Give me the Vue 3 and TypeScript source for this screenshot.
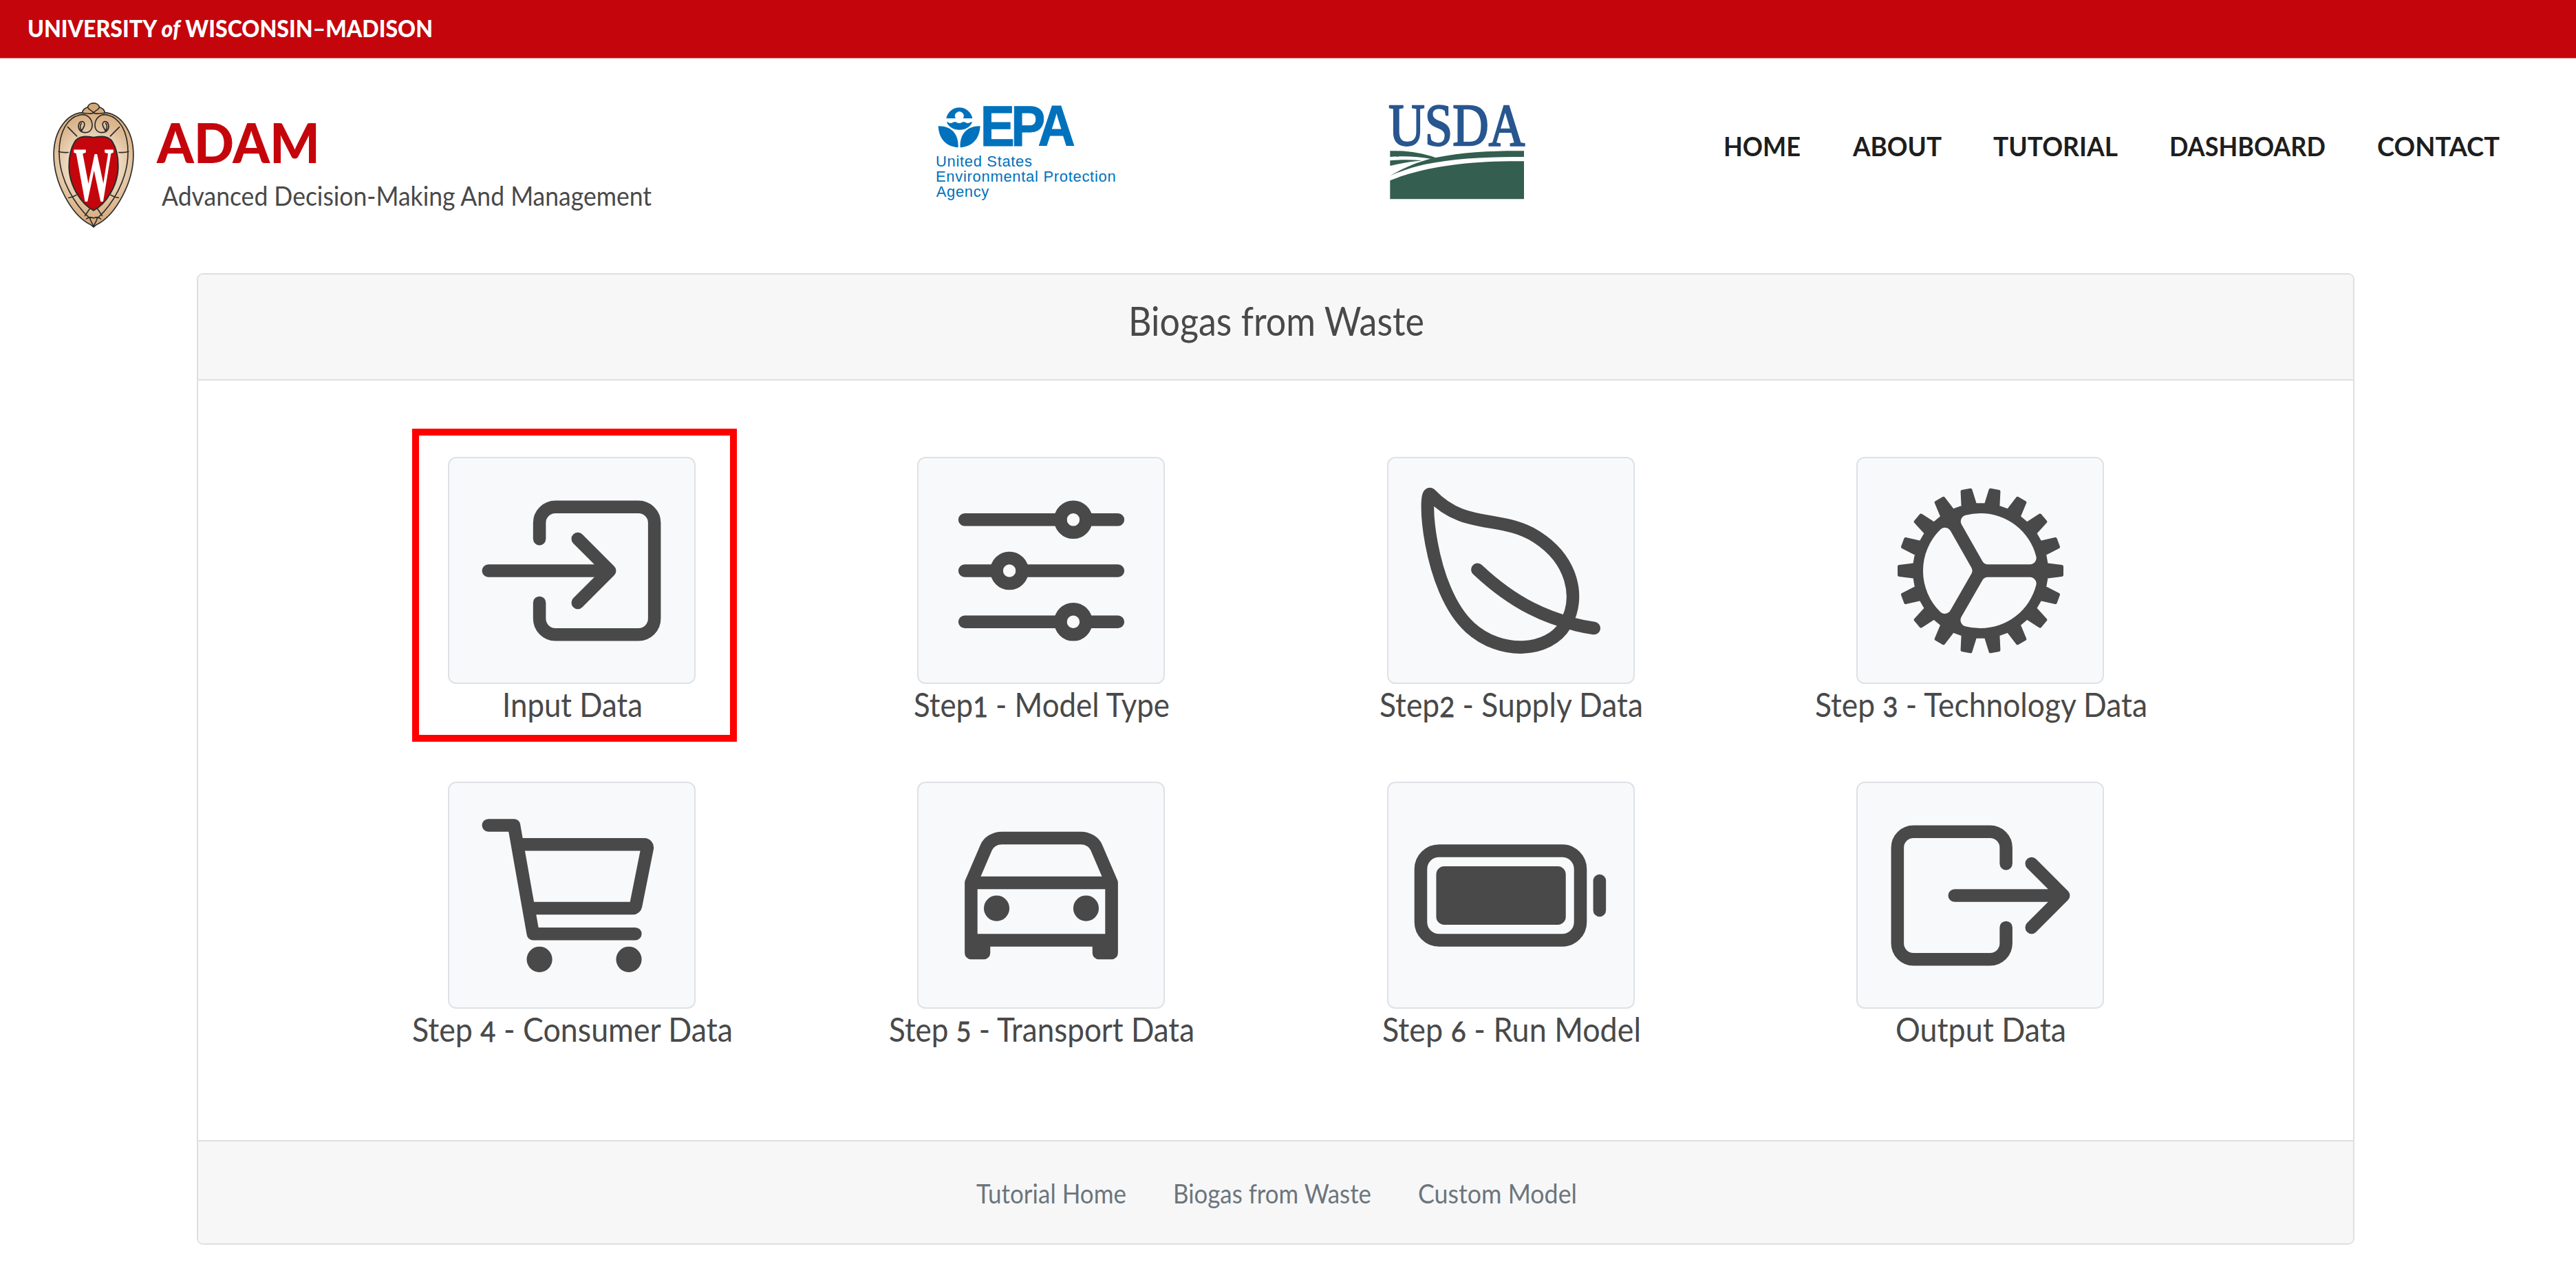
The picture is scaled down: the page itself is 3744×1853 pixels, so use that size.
<script setup lang="ts">
interface Tile {
  icon: string
  parts: { text: string; digit?: boolean }[]
  width: number
  marked?: boolean
}

// Stretches or condenses a line of text to the given width in pixels.
const vFit = {
  mounted(el: HTMLElement, binding: { value: number }) {
    const natural = el.getBoundingClientRect().width
    el.style.display = 'inline-block'
    el.style.width = `${binding.value}px`
    el.style.transformOrigin = '0 50%'
    el.style.transform = `scaleX(${binding.value / natural})`
  },
}

const nav = [
  { text: 'HOME', width: 112, gap: 76 },
  { text: 'ABOUT', width: 129, gap: 75 },
  { text: 'TUTORIAL', width: 181, gap: 75 },
  { text: 'DASHBOARD', width: 227, gap: 75 },
  { text: 'CONTACT', width: 178, gap: 0 },
]

const step = (n: string, rest: string) => [{ text: 'Step ' }, { text: n, digit: true }, { text: rest }]

const tiles: Tile[] = [
  { icon: 'enter', parts: [{ text: 'Input Data' }], width: 204, marked: true },
  { icon: 'options', parts: [{ text: 'Step' }, { text: '1', digit: true }, { text: ' - Model Type' }], width: 372 },
  { icon: 'leaf', parts: [{ text: 'Step' }, { text: '2', digit: true }, { text: ' - Supply Data' }], width: 383 },
  { icon: 'cog', parts: step('3', ' - Technology Data'), width: 483 },
  { icon: 'cart', parts: step('4', ' - Consumer Data'), width: 466 },
  { icon: 'car', parts: step('5', ' - Transport Data'), width: 444 },
  { icon: 'battery', parts: step('6', ' - Run Model'), width: 376 },
  { icon: 'exit', parts: [{ text: 'Output Data' }], width: 248 },
]

const links = [
  { text: 'Tutorial Home', width: 218 },
  { text: 'Biogas from Waste', width: 288 },
  { text: 'Custom Model', width: 231 },
]

// Outline of the 18-tooth gear around (256, 256).
const teeth = 18
const gearPoints = Array.from({ length: teeth }, (_, i) => {
  const mid = (i * 360) / teeth
  return [
    [-5.4, 166],
    [-3, 204],
    [3, 204],
    [5.4, 166],
  ]
    .map(([offset, radius]) => {
      const a = ((mid + offset) * Math.PI) / 180
      return `${(256 + radius * Math.cos(a)).toFixed(2)},${(256 + radius * Math.sin(a)).toFixed(2)}`
    })
    .join(' ')
}).join(' ')
</script>

<template>
  <div class="page">
    <div class="topbar"><span v-fit="589">UNIVERSITY <span class="of">of</span> WISCONSIN–MADISON</span></div>

    <header class="header">
      <svg class="crest" viewBox="0 0 456 638">
        <defs>
          <radialGradient id="sand" gradientUnits="userSpaceOnUse" cx="228" cy="330" r="290">
            <stop offset="0.35" stop-color="#f0dfca" />
            <stop offset="0.62" stop-color="#dfbd97" />
            <stop offset="1" stop-color="#cf9f6b" />
          </radialGradient>
        </defs>
        <g stroke="#2b2a29" stroke-width="5" fill="none" stroke-linejoin="round" stroke-linecap="round">
          <path fill="url(#sand)" d="M228 54c-14 0-24 8-26 18-12 4-22 12-24 24-62 4-126 72-126 186 0 130 82 262 150 302 12 6 20 10 26 18 6-8 14-12 26-18 68-40 150-172 150-302 0-114-64-182-126-186-2-12-12-20-24-24-2-10-12-18-26-18z" />
          <path d="M178 98c18 0 34 6 50 0 16 6 32 0 50 0M202 72c6 16 20 12 26 26 6-14 20-10 26-26" />
          <path d="M168 106C112 118 76 180 76 272c0 120 70 232 134 290M288 106c56 12 92 74 92 166 0 120-70 232-134 290" />
          <path d="M168 106c34-6 54 18 54 46 0 24-18 34-34 32-20-2-30-18-26-34 4-18 26-20 26-2 0 12-8 18-12 28-8-8-10-24-2-32M288 106c-34-6-54 18-54 46 0 24 18 34 34 32 20-2 30-18 26-34-4-18-26-20-26-2 0 12 8 18 12 28 8-8 10-24 2-32" />
          <path d="M114 160l40 40M342 160l-40 40M74 268c14 6 26 4 42 4M382 268c-14 6-26 4-42 4M118 472c14 0 22-6 34-12M338 472c-14 0-22-6-34-12M190 552l20-30M266 552l-20-30M196 566c10-10 22-8 32-4 10-4 22-6 32 4M212 562c2 16 12 22 16 38 4-16 14-22 16-38" />
          <path fill="#c5050c" stroke-width="6" d="M228 206c-30-6-66-10-84 20-22 36-26 74-24 120 4 72 50 152 108 182 58-30 104-110 108-182 2-46-2-84-24-120-18-30-54-26-84-20z" />
        </g>
        <text x="138" y="484" textLength="180" lengthAdjust="spacingAndGlyphs" class="crest-letter">W</text>
      </svg>

      <div class="brand">
        <div class="brand-name"><span v-fit="237">ADAM</span></div>
        <div class="brand-tag"><span v-fit="712">Advanced Decision-Making And Management</span></div>
      </div>

      <svg class="epa" viewBox="0 0 960 540" fill="#0071bc">
        <path d="M106 126a58 58 0 01114 0h-41a19 19 0 10-32 0z" />
        <path d="M108 142c8 0 8 5 17 5s9-5 18-5 9 5 20 5 10-5 19-5 9 5 18 5 9-5 19-5a57 44 0 01-111 0z" />
        <path d="M71 160c56-2 90 34 87 93-54-4-84-38-87-93zM254 160c-56-2-90 34-87 93 54-4 84-38 87-93z" />
        <text x="254" y="247" textLength="398" lengthAdjust="spacingAndGlyphs" class="epa-letters">EPA</text>
        <g class="epa-small">
          <text x="60" y="337" textLength="420">United States</text>
          <text x="60" y="403" textLength="785">Environmental Protection</text>
          <text x="62" y="468" textLength="230">Agency</text>
        </g>
      </svg>

      <svg class="usda" viewBox="0 0 720 540">
        <text x="55" y="244" textLength="594" lengthAdjust="spacingAndGlyphs" class="usda-letters">USDA</text>
        <g fill="#335e50">
          <path d="M61 268c70-2 138 8 200 30l-18 5c-55-10-120-14-182-9z" />
          <path d="M61 310c46-4 92-4 140 0-46 4-94 12-140 23z" />
          <path d="M61 377c60-36 130-66 200-80 120-24 250-30 384-29v26c-160-2-310 8-430 32-56 12-104 28-154 51z" />
          <path d="M61 397c160-66 370-86 584-84v165H61z" />
        </g>
      </svg>

      <nav class="nav">
        <a v-for="item in nav" :key="item.text" :style="{ marginRight: item.gap + 'px' }"><span v-fit="item.width">{{ item.text }}</span></a>
      </nav>
    </header>

    <main class="card">
      <div class="card-header"><span v-fit="430">Biogas from Waste</span></div>

      <div class="card-body">
        <div v-for="tile in tiles" :key="tile.icon" class="cell">
          <div class="tile">
            <svg class="icon" viewBox="0 0 512 512">
              <g v-if="tile.icon === 'enter'">
                <path d="M176 176v-40a40 40 0 0140-40h208a40 40 0 0140 40v240a40 40 0 01-40 40H216a40 40 0 01-40-40v-40" />
                <path d="M272 336l80-80-80-80M48 256h288" />
              </g>
              <g v-else-if="tile.icon === 'options'">
                <path d="M368 128h80M64 128h240M368 384h80M64 384h240M208 256h240M64 256h80" />
                <circle cx="336" cy="128" r="32" />
                <circle cx="176" cy="256" r="32" />
                <circle cx="336" cy="384" r="32" />
              </g>
              <g v-else-if="tile.icon === 'leaf'">
                <path d="M321.89 171.42C233 114 141 155.22 56 65.22c-19.8-21-8.3 235.5 98.1 332.7 77.79 71 197.9 63.08 238.4-5.92s18.28-163.17-70.61-220.58zM173 253c86 81 175 129 292 147" />
              </g>
              <g v-else-if="tile.icon === 'cog'">
                <polygon class="gear" :points="gearPoints" />
                <path class="gear-hole" d="M256 112a143.82 143.82 0 01139.38 108.12A16 16 0 01379.85 240H274.61a16 16 0 01-13.91-8.09l-52.1-91.71a16 16 0 019.85-23.39A146.94 146.94 0 01256 112zM112 256a144 144 0 0143.65-103.41 16 16 0 0125.17 3.47L233.06 248a16 16 0 010 15.87l-52.67 91.7a16 16 0 01-25.18 3.36A143.94 143.94 0 01112 256zm144 144a146.9 146.9 0 01-38.19-4.95 16 16 0 01-9.76-23.44l52.58-91.55a16 16 0 0113.88-8H379.9a16 16 0 0115.52 19.88A143.84 143.84 0 01256 400z" />
              </g>
              <g v-else-if="tile.icon === 'cart'">
                <circle class="solid" cx="176" cy="416" r="16" />
                <circle class="solid" cx="400" cy="416" r="16" />
                <path d="M48 80h64l48 272h256" />
                <path d="M160 288h249.44a8 8 0 007.85-6.43l28.8-144a8 8 0 00-7.85-9.57H128" />
              </g>
              <g v-else-if="tile.icon === 'car'">
                <path d="M80 224l37.78-88.15C123.93 121.5 139.6 112 157.11 112h197.78c17.51 0 33.18 9.5 39.33 23.85L432 224M80 224h352v144H80zM112 368v32H80v-32M432 368v32h-32v-32" />
                <circle class="solid" cx="144" cy="288" r="16" />
                <circle class="solid" cx="368" cy="288" r="16" />
              </g>
              <g v-else-if="tile.icon === 'battery'">
                <rect x="31" y="144" width="400" height="224" rx="45.7" />
                <rect class="solid" x="85.69" y="198.93" width="292.63" height="114.14" rx="4" />
                <path d="M479 219v74" />
              </g>
              <g v-else>
                <path d="M320 176v-40a40 40 0 00-40-40H88a40 40 0 00-40 40v240a40 40 0 0040 40h192a40 40 0 0040-40v-40M384 176l80 80-80 80M191 256h273" />
              </g>
            </svg>
          </div>
          <div class="label"><span v-fit="tile.width"><span v-for="(part, i) in tile.parts" :key="i" :class="{ digit: part.digit }">{{ part.text }}</span></span></div>
          <div v-if="tile.marked" class="marker"></div>
        </div>
      </div>

      <div class="card-footer">
        <a v-for="link in links" :key="link.text"><span v-fit="link.width">{{ link.text }}</span></a>
      </div>
    </main>
  </div>
</template>

<style>
body {
  margin: 0;
  background: #fff;
}
</style>

<style scoped>
.page {
  width: 3744px;
  height: 1853px;
  overflow: hidden;
  background: #fff;
  color: #494949;
  font-family: Lato, 'Liberation Sans', sans-serif;
  white-space: pre;
}
.topbar {
  box-sizing: border-box;
  height: 85px;
  padding: 19px 0 0 40px;
  background: #c5050c;
  border-bottom: 1px solid #e27175;
  color: #fff;
  font-size: 35px;
  font-weight: 900;
  line-height: 42px;
}
.of {
  font-style: italic;
}
.header {
  display: flex;
  align-items: flex-start;
  height: 312px;
}
.crest {
  flex: none;
  width: 150px;
  height: 210px;
  margin: 47px 0 0 61px;
  overflow: visible;
}
.crest-letter {
  fill: #fff;
  font-family: 'Liberation Serif', serif;
  font-size: 338px;
  font-weight: 700;
}
.brand {
  flex: none;
  width: 1112px;
  margin: 81px 0 0 17px;
}
.brand-name {
  color: #c5050c;
  font-size: 80px;
  font-weight: 900;
  line-height: 80px;
}
.brand-tag {
  margin: 14px 0 0 7px;
  font-size: 39px;
  line-height: 48px;
}
.epa {
  flex: none;
  width: 320px;
  height: 180px;
  margin-top: 45px;
  overflow: visible;
}
.epa-letters {
  font-family: 'Liberation Sans', sans-serif;
  font-size: 251px;
  font-weight: 700;
  letter-spacing: -18px;
  stroke: #0071bc;
  stroke-width: 3px;
}
.epa-small {
  font-family: 'Liberation Sans', sans-serif;
  font-size: 66px;
}
.usda {
  flex: none;
  width: 240px;
  height: 180px;
  margin: 45px 0 0 340px;
  overflow: visible;
}
.usda-letters {
  fill: #28568f;
  stroke: #28568f;
  stroke-width: 7px;
  font-family: 'Liberation Serif', serif;
  font-size: 260px;
}
.nav {
  display: flex;
  margin: 104px 0 0 265px;
  color: #1e1e1e;
  font-size: 38px;
  font-weight: 700;
  line-height: 46px;
}
.card {
  box-sizing: border-box;
  display: flex;
  flex-direction: column;
  width: 3136px;
  height: 1412px;
  margin-left: 286px;
  border: 2px solid #dfdfdf;
  border-radius: 9px;
  overflow: hidden;
}
.card-header {
  box-sizing: border-box;
  height: 154px;
  padding: 32px 0 0 2px;
  border-bottom: 2px solid #dfdfdf;
  background: #f7f7f7;
  font-size: 58px;
  line-height: 70px;
  text-align: center;
}
.card-body {
  display: grid;
  grid-template-columns: repeat(4, 682.5px);
  grid-auto-rows: 472px;
  justify-content: center;
  flex: 1;
  padding: 111px 0 0 1px;
}
.cell {
  position: relative;
  display: flex;
  flex-direction: column;
  align-items: center;
}
.tile {
  box-sizing: border-box;
  display: flex;
  justify-content: center;
  width: 360px;
  height: 330px;
  padding-top: 15px;
  border: 2px solid #dee2e6;
  border-radius: 12px;
  background: #f8f9fb;
}
.icon {
  width: 297px;
  height: 297px;
  fill: none;
  stroke: #494949;
  stroke-width: 32px;
  stroke-linecap: round;
  stroke-linejoin: round;
}
.solid {
  fill: #494949;
}
.gear {
  fill: #494949;
  stroke-width: 8px;
}
.gear-hole {
  fill: #f8f9fb;
  stroke: none;
}
.label {
  padding: 2px 0 0 2px;
  font-size: 48px;
  line-height: 56px;
}
.digit {
  font-size: 0.85em;
  -webkit-text-stroke: 0.8px #494949;
}
.marker {
  position: absolute;
  top: -41px;
  left: 109px;
  box-sizing: border-box;
  width: 472px;
  height: 455px;
  border: 10px solid #f00;
}
.card-footer {
  box-sizing: border-box;
  display: flex;
  justify-content: center;
  gap: 68px;
  height: 150px;
  padding: 51px 0 0 2px;
  border-top: 2px solid #dfdfdf;
  background: #f7f7f7;
  color: #6c757d;
  font-size: 39px;
  line-height: 48px;
}
</style>
